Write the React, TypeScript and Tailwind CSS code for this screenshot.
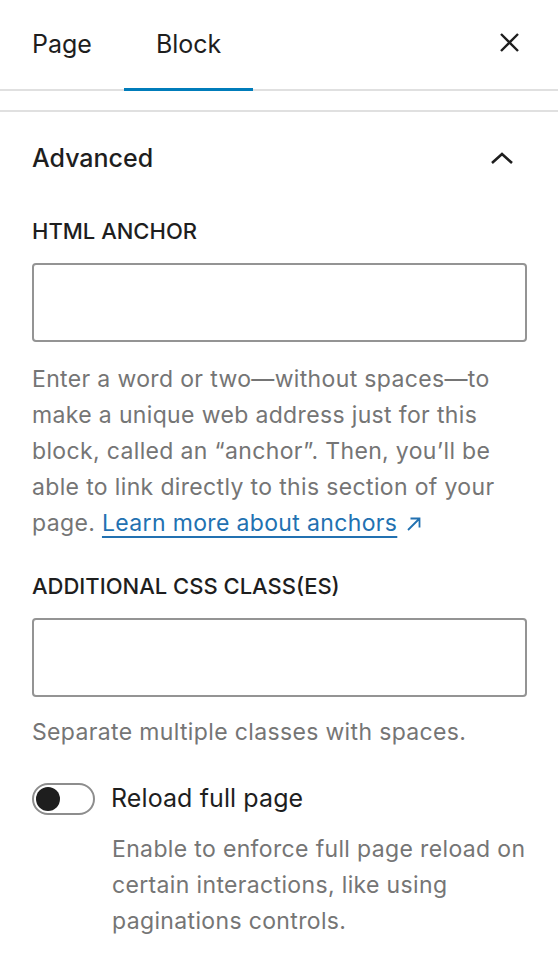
import React from 'react';

const font = { fontFamily: 'Inter, "Liberation Sans", sans-serif' };

function CloseIcon() {
  return (
    <svg width="21" height="21" viewBox="0 0 21 21" fill="none" stroke="#1e1e1e" strokeWidth="2.4">
      <path d="M2 2 L19 19 M19 2 L2 19" />
    </svg>
  );
}

function ChevronUp() {
  return (
    <svg width="22" height="12" viewBox="0 0 22 12" fill="none" stroke="#1e1e1e" strokeWidth="2.6">
      <path d="M1 11 L11 2 L21 11" />
    </svg>
  );
}

function ExternalArrow() {
  return (
    <svg width="14" height="14" viewBox="0 0 14 14" fill="none" stroke="#2271b1" strokeWidth="1.8" className="inline-block ml-[10px] align-[0px]">
      <path d="M1 13 L12.5 1.5 M3.5 1.5 H12.5 V10.5" />
    </svg>
  );
}

export default function App() {
  return (
    <div className="w-[558px] h-[964px] bg-white text-[#1e1e1e] overflow-hidden" style={font}>
      {/* Tabs */}
      <div className="relative flex items-stretch h-[91px] border-b-2 border-[#e0e0e0]">
        <button className="px-8 text-[25px] leading-none text-[#1e1e1e]">Page</button>
        <button className="relative px-8 text-[25px] leading-none text-[#1e1e1e]">
          Block
          <span className="absolute left-0 right-0 -bottom-[2px] h-[3px] bg-[#007cba]" />
        </button>
        <button className="ml-auto mr-[38px] flex items-center -mt-[4px]">
          <CloseIcon />
        </button>
      </div>

      <div className="h-[19px]" />

      {/* Advanced panel */}
      <div className="border-t-2 border-[#e0e0e0] px-8">
        <div className="flex items-center justify-between h-[94px]">
          <span className="text-[25px] font-medium">Advanced</span>
          <span className="mr-[13px] -mt-[3px]">
            <ChevronUp />
          </span>
        </div>

        <div className="mt-[14px] text-[22px] font-medium uppercase leading-none">HTML anchor</div>
        <div className="mt-[21px] h-[79px] border-2 border-[#949494] rounded-[4px] w-[495px]" />
        <p className="mt-[19px] text-[23px] tracking-[0.35px] leading-[36px] text-[#757575]">
          Enter a word or two—without spaces—to make a unique web address just for this block, called an “anchor”. Then, you’ll be able to link directly to this section of your page.{' '}
          <a className="text-[#2271b1] underline underline-offset-[5px] decoration-[2px]">Learn more about anchors</a>
          <ExternalArrow />
        </p>

        <div className="mt-[34px] text-[22px] font-medium uppercase leading-none">Additional CSS class(es)</div>
        <div className="mt-[21px] h-[79px] border-2 border-[#949494] rounded-[4px] w-[495px]" />
        <p className="mt-[17px] text-[23px] tracking-[0.35px] leading-[36px] text-[#757575]">Separate multiple classes with spaces.</p>

        {/* Toggle */}
        <div className="mt-[30px] flex items-center gap-[16px]">
          <span className="relative w-[63px] h-[32px] rounded-full border-2 border-[#8d8d8d] bg-white">
            <span className="absolute left-[2px] top-[2px] w-[24px] h-[24px] rounded-full bg-[#1e1e1e]" />
          </span>
          <span className="text-[25px] tracking-[0.1px]">Reload full page</span>
        </div>
        <p className="mt-[13px] pl-[80px] text-[23px] tracking-[0.35px] leading-[36px] text-[#757575]">
          Enable to enforce full page reload on certain interactions, like using paginations controls.
        </p>
      </div>
    </div>
  );
}
